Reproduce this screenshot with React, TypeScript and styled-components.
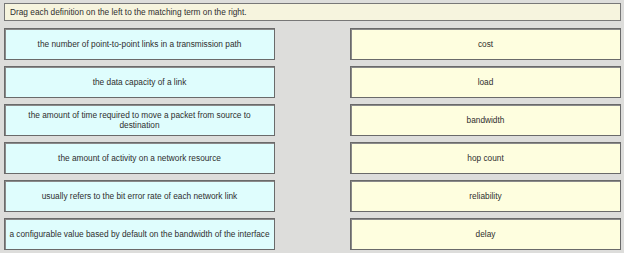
import styled, { createGlobalStyle } from "styled-components";

const GlobalStyle = createGlobalStyle`
  html, body {
    margin: 0;
    padding: 0;
    background: #dddddb;
  }
`;

const definitions = [
  "the number of point-to-point links in a transmission path",
  "the data capacity of a link",
  "the amount of time required to move a packet from source to destination",
  "the amount of activity on a network resource",
  "usually refers to the bit error rate of each network link",
  "a configurable value based by default on the bandwidth of the interface",
];

const terms = ["cost", "load", "bandwidth", "hop count", "reliability", "delay"];

const Page = styled.div`
  width: 624px;
  height: 253px;
  box-sizing: border-box;
  padding: 3px 3px 0 4px;
  background: #dddddb;
  font-family: "Liberation Sans", Arial, sans-serif;
  font-size: 8.3px;
  color: #2e2e2e;
`;

const Instructions = styled.div`
  height: 18px;
  box-sizing: border-box;
  border: 1px solid #777;
  background: #f6f4de;
  display: flex;
  align-items: center;
  padding-left: 5px;
  margin-bottom: 7px;
`;

const Board = styled.div`
  display: grid;
  grid-template-columns: 271px 271px;
  column-gap: 75px;
`;

const Column = styled.div`
  display: flex;
  flex-direction: column;
  gap: 6px;
`;

const Card = styled.div<{ $kind: "definition" | "term" }>`
  height: 32px;
  box-sizing: border-box;
  border: 1px solid #6a6a6a;
  box-shadow: inset 1px 1px 0 #8a8a8a;
  background: ${(p) => (p.$kind === "definition" ? "#dffdfd" : "#fefedf")};
  display: flex;
  align-items: center;
  justify-content: center;
  text-align: center;
  line-height: 10px;
  padding: 0 4px;
`;

const App = () => {
  return (
    <Page>
      <GlobalStyle />
      <Instructions>Drag each definition on the left to the matching term on the right.</Instructions>
      <Board>
        <Column>
          {definitions.map((d) => (
            <Card key={d} $kind="definition">
              {d}
            </Card>
          ))}
        </Column>
        <Column>
          {terms.map((t) => (
            <Card key={t} $kind="term">
              {t}
            </Card>
          ))}
        </Column>
      </Board>
    </Page>
  );
};

export default App;
